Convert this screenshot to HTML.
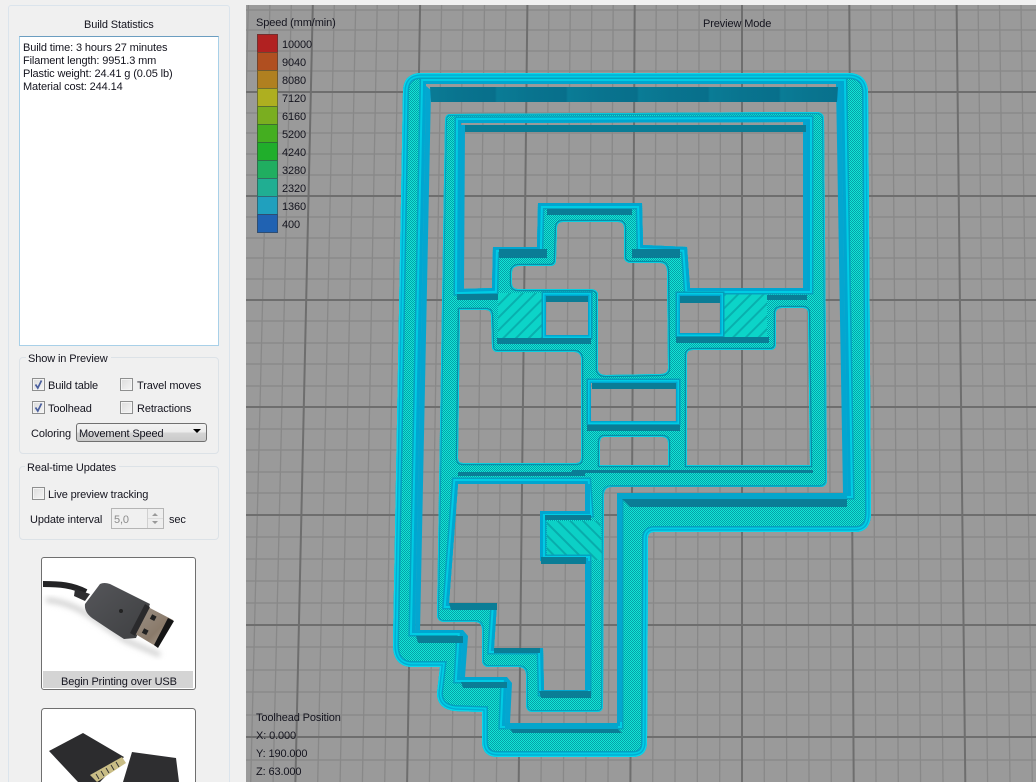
<!DOCTYPE html>
<html><head><meta charset="utf-8"><style>
html,body{margin:0;padding:0;background:#f0f0f0;width:1036px;height:782px;overflow:hidden}
#r{position:relative;width:1036px;height:782px;overflow:hidden;background:#f0f0f0}
.t{position:absolute;white-space:nowrap;font:11px/14px "Liberation Sans",sans-serif;letter-spacing:-.12px;color:#14141e;margin-top:1px}
.g{position:absolute;left:19px;width:198px;border:1px solid #dce2e7;border-radius:4px;box-sizing:content-box}
.l{position:absolute;background:#f0f0f0;padding:0 3px 0 2px}
.c{position:absolute;width:11px;height:11px;border:1px solid #8e8f8f;outline:1px solid #f4f4f4;outline-offset:-2px;background:linear-gradient(135deg,#dcdcdc,#f5f5f5)}
.s{position:absolute;left:257px;width:19px;height:17px;border:1px solid rgba(60,60,60,.55)}
</style></head><body><div id="r">
<div style="position:absolute;left:8px;top:5px;width:222px;height:790px;border:1px solid #dbe4ec;border-radius:3px;background:#f0f0f0;box-sizing:border-box"></div>
<div class="t" style="left:84px;top:17px">Build Statistics</div>
<div style="position:absolute;left:19px;top:36px;width:198px;height:308px;background:#fff;border:1px solid #a8d0e8;border-top-color:#6b9dc0"></div>
<div class="t" style="left:23px;top:41px;line-height:13px">Build time: 3 hours 27 minutes<br>Filament length: 9951.3 mm<br>Plastic weight: 24.41 g (0.05 lb)<br>Material cost: 244.14</div>

<div class="g" style="top:357px;height:95px"></div>
<div class="t l" style="left:26px;top:351px">Show in Preview</div>
<div class="c" style="left:32px;top:378px"></div>
<div class="c" style="left:120px;top:378px"></div>
<div class="c" style="left:32px;top:401px"></div>
<div class="c" style="left:120px;top:401px"></div>
<svg style="position:absolute;left:32px;top:378px" width="13" height="36"><path d="M3.500 6.500L5.800 10L9.500 2.500M3.500 29.500L5.800 33L9.500 25.500" fill="none" stroke="#4a5f9e" stroke-width="1.700"/></svg>
<div class="t" style="left:48px;top:378px">Build table</div>
<div class="t" style="left:137px;top:378px">Travel moves</div>
<div class="t" style="left:48px;top:401px">Toolhead</div>
<div class="t" style="left:137px;top:401px">Retractions</div>
<div class="t" style="left:31px;top:426px">Coloring</div>
<div style="position:absolute;left:76px;top:423px;width:129px;height:17px;border:1px solid #707070;border-radius:3px;background:linear-gradient(#f2f2f2 0,#ececec 45%,#d4d4d4 55%,#cacaca 100%)"></div>
<div class="t" style="left:79px;top:426px">Movement Speed</div>
<svg style="position:absolute;left:193px;top:429px" width="9" height="6"><path d="M0 0H8L4 4Z" fill="#000"/></svg>

<div class="g" style="top:466px;height:72px"></div>
<div class="t l" style="left:25px;top:460px">Real-time Updates</div>
<div class="c" style="left:32px;top:487px"></div>
<div class="t" style="left:48px;top:487px">Live preview tracking</div>
<div class="t" style="left:30px;top:512px">Update interval</div>
<div style="position:absolute;left:111px;top:508px;width:51px;height:19px;border:1px solid #b5b5b5;background:#f0f0f0"></div>
<div style="position:absolute;left:147px;top:509px;width:15px;height:19px;border-left:1px solid #d0d0d0;background:linear-gradient(#eee 0,#eee 48%,#bbb 50%,#eee 52%)"></div>
<svg style="position:absolute;left:150px;top:511px" width="10" height="16"><path d="M2 5L5 2L8 5ZM2 10L5 13L8 10Z" fill="#999"/></svg>
<div class="t" style="left:114px;top:512px;color:#8a8a8a">5,0</div>
<div class="t" style="left:169px;top:512px">sec</div>

<div style="position:absolute;left:41px;top:557px;width:153px;height:131px;border:1px solid #6f6f6f;border-radius:3px;background:#fff;overflow:hidden"></div>
<div style="position:absolute;left:43px;top:671px;width:150px;height:17px;background:#d4d4d4"></div>
<div class="t" style="left:61px;top:674px">Begin Printing over USB</div>
<svg style="position:absolute;left:0;top:0" width="230" height="782">
<defs><filter id="b"><feGaussianBlur stdDeviation="3"/></filter>
<linearGradient id="m" x1="0" y1="0" x2="1" y2="1"><stop offset="0" stop-color="#9d9389"/><stop offset=".6" stop-color="#8a7a6a"/><stop offset="1" stop-color="#b7ab9d"/></linearGradient>
<linearGradient id="k" x1="0" y1="0" x2="1" y2="1"><stop offset="0" stop-color="#55565a"/><stop offset="1" stop-color="#3e3f41"/></linearGradient></defs>
<path d="M46 600C60 601 75 606 90 616L125 640L160 655" fill="none" stroke="#cfcfcf" stroke-width="5" filter="url(#b)"/>
<path d="M43 584C60 584 72 585 86 592" fill="none" stroke="#232325" stroke-width="6"/>
<path d="M75 589L90 594L85 601L74 596Z" fill="#2e2e30"/>
<path d="M85 604L100 584Q104 582 110 584L150 604L136 638L124 639L110 630L92 618Q84 612 85 604Z" fill="url(#k)"/>
<path d="M148 607L173 620L157 647L132 632Z" fill="url(#m)"/>
<path d="M168 618L174 621L158 648L154 645Z" fill="#151515"/>
<path d="M145 604L150 607L135 636L130 633Z" fill="#2a2a2c"/>
<rect x="151" y="615" width="5" height="5" fill="#222" transform="rotate(28 153 617)"/>
<rect x="143" y="629" width="5" height="5" fill="#222" transform="rotate(28 145 631)"/>
<circle cx="121" cy="611" r="2" fill="#222"/>
<rect x="41.500" y="708.500" width="154" height="90" rx="3" fill="#fff" stroke="#6f6f6f"/>
<path d="M49 751L83 733L124 757L100 782H78Z" fill="#2c2c2e"/>
<path d="M90 775L122 757L126 763L97 782Z" fill="#c9bd85"/>
<path d="M96 774l3 5M101 771l3 5M106 768l3 5M111 765l3 5M116 762l3 5" stroke="#333" stroke-width="1"/>
<path d="M132 752L176 758L179 782H123Z" fill="#2e2e30"/>
</svg>

<svg style="position:absolute;left:0;top:0" width="1036" height="782" viewBox="0 0 1036 782">
<defs>
<clipPath id="vp"><rect x="246" y="5" width="790" height="777"/></clipPath>
<pattern id="ch" width="2" height="2" patternUnits="userSpaceOnUse"><rect width="2" height="2" fill="#12e6d6"/><rect width="1" height="1" fill="#04a0a8"/><rect x="1" y="1" width="1" height="1" fill="#04a0a8"/></pattern>
<pattern id="sq" width="9" height="9" patternUnits="userSpaceOnUse" patternTransform="rotate(-45)"><rect width="9" height="9" fill="#0cd4c8"/><rect width="9" height="2" fill="#08b0ae"/></pattern>
<pattern id="sq2" width="9" height="9" patternUnits="userSpaceOnUse" patternTransform="rotate(45)"><rect width="9" height="9" fill="#0cd0c6"/><rect width="9" height="2" fill="#08acac"/></pattern>
<linearGradient id="sh" gradientUnits="userSpaceOnUse" x1="426" y1="0" x2="497" y2="0" spreadMethod="repeat"><stop offset="0" stop-color="#0a7c96"/><stop offset=".45" stop-color="#09748f"/><stop offset=".97" stop-color="#086f8b"/><stop offset="1" stop-color="#0a7c96"/></linearGradient>
<path id="o1" d="M420 73L850 73Q866 74 868 90L871 513Q871 532 855 532L654 532Q648 532 648 538L647 742Q647 757 632 757L498 757Q482 757 482 741L482 712L455 711Q437 709 437 693L440 667L410 667Q393 665 393 645L403 92Q403 74 420 73Z"/>
<path id="o2" d="M450 114L818 112Q824 113 824 119L827 480Q827 487 820 487L612 487Q604 487 604 495L603 706Q603 712 597 712L533 712Q526 712 526 705L526 675Q526 667 518 667L489 667Q482 667 482 660L482 630Q482 622 475 622L445 622Q437 622 437 615L445 121Q445 114 450 114Z"/>
<path id="big" d="M426 84L415 630L463 630L460 677L507 677L505 723L617 723L617 493L848 493L841 84ZM461 123L460 289L492 288L493 247L537 247L538 203L642 203L643 245L687 247L690 288L807 288L807 122ZM458 484L449 603L497 603L494 648L543 648L544 690L585 690L585 561L540 561L540 511L587 511L585 484Z"/>
<path id="win" d="M546 296L546 335L588 335L588 296ZM591 383L591 421L676 421L676 383ZM680 296L680 333L720 333L720 296Z"/>
<path id="thin" d="M563 222L618 222Q624 222 624 228L624 257Q624 262 630 263L660 263Q667 263 667 272L668 368Q668 374 660 374L606 375Q599 375 598 370L598 294Q597 289 590 289L518 289Q512 289 512 283L512 273Q512 266 519 266L550 266Q556 266 556 260L557 228Q557 222 563 222ZM460 310L486 310Q491 310 491 316L492 346Q492 352 498 352L574 352Q580 352 581 358L581 458Q581 463 576 463L463 463Q458 463 458 458ZM604 437L662 437Q668 437 668 443L668 465L600 465L600 443Q600 437 604 437ZM693 350L770 350Q776 350 776 344L776 313Q776 308 782 308L803 308Q808 308 808 313L810 465L687 465L687 355Q687 350 693 350Z"/>
<clipPath id="wc"><path clip-rule="evenodd" d="M420 73L850 73Q866 74 868 90L871 513Q871 532 855 532L654 532Q648 532 648 538L647 742Q647 757 632 757L498 757Q482 757 482 741L482 712L455 711Q437 709 437 693L440 667L410 667Q393 665 393 645L403 92Q403 74 420 73ZM426 84L415 630L463 630L460 677L507 677L505 723L617 723L617 493L848 493L841 84Z
M450 114L818 112Q824 113 824 119L827 480Q827 487 820 487L612 487Q604 487 604 495L603 706Q603 712 597 712L533 712Q526 712 526 705L526 675Q526 667 518 667L489 667Q482 667 482 660L482 630Q482 622 475 622L445 622Q437 622 437 615L445 121Q445 114 450 114ZM461 123L460 289L492 288L493 247L537 247L538 203L642 203L643 245L687 247L690 288L807 288L807 122ZM546 296L546 335L588 335L588 296ZM591 383L591 421L676 421L676 383ZM680 296L680 333L720 333L720 296ZM458 484L449 603L497 603L494 648L543 648L544 690L585 690L585 561L540 561L540 511L587 511L585 484Z
M563 222L618 222Q624 222 624 228L624 257Q624 262 630 263L660 263Q667 263 667 272L668 368Q668 374 660 374L606 375Q599 375 598 370L598 294Q597 289 590 289L518 289Q512 289 512 283L512 273Q512 266 519 266L550 266Q556 266 556 260L557 228Q557 222 563 222Z
M460 310L486 310Q491 310 491 316L492 346Q492 352 498 352L574 352Q580 352 581 358L581 458Q581 463 576 463L463 463Q458 463 458 458Z
M604 437L662 437Q668 437 668 443L668 465L600 465L600 443Q600 437 604 437Z
M693 350L770 350Q776 350 776 344L776 313Q776 308 782 308L803 308Q808 308 808 313L810 465L687 465L687 355Q687 350 693 350Z"/></clipPath>
</defs>
<g clip-path="url(#vp)">
<rect x="246" y="5" width="790" height="777" fill="#9a9a9a"/>
<g stroke="#888" stroke-width="1.300" fill="none">
<path d="M248.400 5L228.400 782M269.900 5L250.700 782M291.300 5L273.100 782M334.300 5L317.700 782M355.700 5L340.100 782M377.200 5L362.400 782M398.600 5L384.700 782M441.600 5L429.400 782M463 5L451.700 782M484.500 5L474 782M505.900 5L496.400 782M548.900 5L541 782M570.300 5L563.400 782M591.800 5L585.700 782M613.200 5L608 782M656.200 5L652.700 782M677.600 5L675 782M699.100 5L697.300 782M720.500 5L719.700 782M763.500 5L764.300 782M784.900 5L786.700 782M806.400 5L809 782M827.800 5L831.300 782M870.800 5L876 782M892.200 5L898.300 782M913.700 5L920.600 782M935.100 5L943 782M978.100 5L987.600 782M999.500 5L1010 782M1021 5L1032.300 782"/>
<path d="M246 10H1036M246 30H1036M246 51H1036M246 71H1036M246 113H1036M246 133H1036M246 154H1036M246 175H1036M246 217H1036M246 238H1036M246 258H1036M246 279H1036M246 321H1036M246 343H1036M246 364H1036M246 386H1036M246 429H1036M246 450H1036M246 472H1036M246 493H1036M246 537H1036M246 559H1036M246 581H1036M246 603H1036M246 647H1036M246 670H1036M246 692H1036M246 715H1036M246 760H1036"/>
</g>
<g stroke="#6e6e6e" stroke-width="2" fill="none">
<path d="M312.800 5L295.400 782M420.100 5L407.100 782M527.400 5L518.700 782M634.700 5L630.400 782M742 5L742 782M849.300 5L853.700 782M956.600 5L965.300 782"/>
<path d="M246 92H1036M246 196H1036M246 300H1036M246 407H1036M246 515H1036M246 625H1036M246 737H1036"/>
</g>
<g clip-path="url(#wc)">
<rect x="380" y="60" width="500" height="710" fill="url(#ch)"/>
<rect x="498" y="293" width="48" height="45" fill="url(#sq)"/>
<rect x="721" y="292" width="46" height="45" fill="url(#sq)"/>
<path d="M547 521H600L603 560H547Z" fill="url(#sq2)"/>
<g fill="none">
<use href="#o1" stroke="#049fc0" stroke-width="12"/>
<use href="#o1" stroke="#00cde4" stroke-width="9"/>
<use href="#o1" stroke="#00aed4" stroke-width="5.500"/>
<use href="#o1" stroke="#0cd6ea" stroke-width="2.500"/>
<use href="#o2" stroke="#069fbc" stroke-width="4"/>
<use href="#o2" stroke="#08d4e6" stroke-width="1.600"/>
<use href="#big" stroke="#04a2c0" stroke-width="13"/>
<use href="#big" stroke="#00cce4" stroke-width="10"/>
<use href="#big" stroke="#00a6d0" stroke-width="6"/>
<use href="#win" stroke="#049cba" stroke-width="9"/>
<use href="#win" stroke="#00cce4" stroke-width="6"/>
<use href="#win" stroke="#00a6d0" stroke-width="3"/>
<use href="#thin" stroke="#068ea9" stroke-width="4.500"/>
<use href="#thin" stroke="#08d8e6" stroke-width="1.800"/>
</g>
</g>
<g fill="#04a6d0">
<path d="M426 86L431 90L420 632H415Z"/>
<path d="M836 84H841L848 493H843Z"/>
<path d="M461 125H465L464 289H460Z"/>
<path d="M803 122H807V288H803Z"/>
<path d="M617 493H622V722H617Z"/>
<path d="M463 630L468 636L465 677H460Z"/>
<path d="M507 677L512 683L510 723H505Z"/>
<path d="M585 484H590V511H585ZM585 561H590V690H585Z"/>
</g>
<g fill="#0a7d96">
<path d="M430 87H838L837 102H431Z" fill="url(#sh)"/>
<path d="M465 125H806V132H465Z"/>
<path d="M547 209H632V215H547Z"/>
<path d="M499 249H547V258H499Z"/>
<path d="M632 249H680V258H632Z"/>
<path d="M546 296H588V302H546Z"/>
<path d="M497 338H591V344H497Z"/>
<path d="M457 294H498V300H457Z"/>
<path d="M592 383H676V389H592Z"/>
<path d="M587 425H680V431H587Z"/>
<path d="M680 296H720V303H680Z"/>
<path d="M767 295H807V300H767Z"/>
<path d="M676 337H769V343H676Z"/>
<path d="M458 472H585V476H458Z"/>
<path d="M572 470H813V473H572Z"/>
<path d="M622 499H847V507L630 507Z"/>
<path d="M510 729H618L622 733H513Z"/>
<path d="M461 682H507V688H463Z"/>
<path d="M416 636H463V643H418Z"/>
<path d="M545 515H591V520H545Z"/>
<path d="M541 557H586V564H541Z"/>
<path d="M449 603H497V610H451Z"/>
<path d="M494 648H540V653H494Z"/>
<path d="M539 691H591V698H541Z"/>
</g>
<g fill="#04a6cc">
<path d="M505 723H618V729H505Z"/>
<path d="M617 493H847V499H617Z"/>
</g>
</g>
</svg>

<div class="t" style="left:256px;top:15px">Speed (mm/min)</div>
<div class="t" style="left:703px;top:16px">Preview Mode</div>
<div class="s" style="top:34px;background:#b12121"></div>
<div class="s" style="top:52px;background:#b04f20"></div>
<div class="s" style="top:70px;background:#b08020"></div>
<div class="s" style="top:88px;background:#aeaf20"></div>
<div class="s" style="top:106px;background:#7aae20"></div>
<div class="s" style="top:124px;background:#44ae20"></div>
<div class="s" style="top:142px;background:#20ae2b"></div>
<div class="s" style="top:160px;background:#20ae60"></div>
<div class="s" style="top:178px;background:#20ae92"></div>
<div class="s" style="top:196px;background:#20a0be"></div>
<div class="s" style="top:214px;background:#2062b2"></div>
<div class="t" style="left:282px;top:37px">10000</div>
<div class="t" style="left:282px;top:55px">9040</div>
<div class="t" style="left:282px;top:73px">8080</div>
<div class="t" style="left:282px;top:91px">7120</div>
<div class="t" style="left:282px;top:109px">6160</div>
<div class="t" style="left:282px;top:127px">5200</div>
<div class="t" style="left:282px;top:145px">4240</div>
<div class="t" style="left:282px;top:163px">3280</div>
<div class="t" style="left:282px;top:181px">2320</div>
<div class="t" style="left:282px;top:199px">1360</div>
<div class="t" style="left:282px;top:217px">400</div>
<div class="t" style="left:256px;top:710px">Toolhead Position</div>
<div class="t" style="left:256px;top:728px">X: 0.000</div>
<div class="t" style="left:256px;top:746px">Y: 190.000</div>
<div class="t" style="left:256px;top:764px">Z: 63.000</div>
</div></body></html>
